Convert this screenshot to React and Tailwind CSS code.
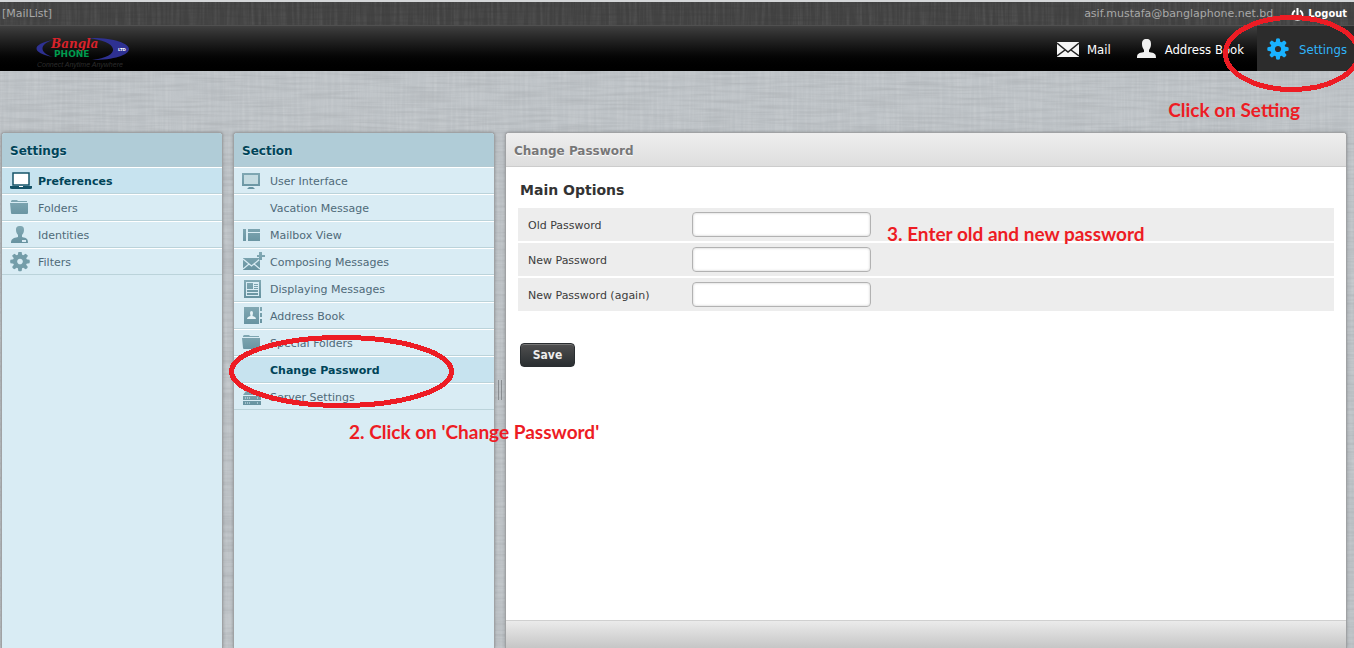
import React from "react";

const VERDANA = "font-['Verdana','DejaVu_Sans',sans-serif]";
const TAHOMA = "font-['Tahoma','DejaVu_Sans_Condensed','DejaVu_Sans',sans-serif]";
const NOTE = "font-['Lato',sans-serif] text-[19px] leading-6 font-bold text-[#ed1c24] whitespace-nowrap";

const C = "url(#teal)";

function LinenDefs() {
  return (
    <svg className="absolute h-0 w-0" aria-hidden="true">
      <defs>
        <linearGradient id="teal" gradientUnits="userSpaceOnUse" x1="0" y1="0" x2="0" y2="20">
          <stop offset="0" stopColor="#83aab5" />
          <stop offset="1" stopColor="#64909e" />
        </linearGradient>
        <filter id="warp" x="0" y="0" width="100%" height="100%">
          <feTurbulence type="fractalNoise" baseFrequency="0.35 0.02" numOctaves="2" seed="3" />
          <feColorMatrix type="matrix" values="0 0 0 0 1  0 0 0 0 1  0 0 0 0 1  1.6 0 0 0 -0.6" />
        </filter>
        <filter id="weft" x="0" y="0" width="100%" height="100%">
          <feTurbulence type="fractalNoise" baseFrequency="0.02 0.35" numOctaves="2" seed="8" />
          <feColorMatrix type="matrix" values="0 0 0 0 0  0 0 0 0 0  0 0 0 0 0  1.6 0 0 0 -0.6" />
        </filter>
      </defs>
    </svg>
  );
}

function Linen({ className }) {
  return (
    <svg className={`pointer-events-none absolute inset-0 -z-10 h-full w-full ${className}`} aria-hidden="true">
      <rect width="100%" height="100%" filter="url(#warp)" />
      <rect width="100%" height="100%" filter="url(#weft)" opacity="0.5" />
    </svg>
  );
}

function GearShape({ fill, hole = 3.1 }) {
  const teeth = [0, 45, 90, 135, 180, 225, 270, 315];
  return (
    <g>
      {teeth.map((a) => (
        <path key={a} d="M-2.4 -6.500 L-1.8 -10.3 Q0 -11.1 1.8 -10.3 L2.4 -6.500 Z" fill={fill} transform={`rotate(${a})`} />
      ))}
      <circle r={(7.6 + hole) / 2} fill="none" stroke={fill} strokeWidth={7.6 - hole} />
    </g>
  );
}

function Logo() {
  return (
    <svg width="94" height="36" viewBox="0 0 94 36" role="img" aria-label="Bangla Phone Ltd">
      <path d="M17 5 C-5 9 -5 18 17 22 C3 18 3 9 17 5 Z" fill="#2e3192" />
      <path d="M52 3 C76 2 93 8 93 14 C93 20 78 25 56 25 C70 23 78 19 77 14 C76 8 66 5 52 3 Z" fill="#2e3192" />
      <text x="15" y="13" fontFamily="DejaVu Serif, serif" fontStyle="italic" fontWeight="bold" fontSize="12" fill="#d8222a">
        Bangla
      </text>
      <text x="18" y="22" fontFamily="DejaVu Sans, sans-serif" fontWeight="bold" fontSize="9" fill="#009a4e">
        PHONE
      </text>
      <text x="82" y="16" fontFamily="DejaVu Sans, sans-serif" fontWeight="bold" fontSize="4" fill="#ffffff">
        LTD
      </text>
      <text x="1" y="32" fontFamily="Liberation Sans, sans-serif" fontStyle="italic" fontSize="7" fill="#2d2d2d">
        Connect Anytime Anywhere
      </text>
    </svg>
  );
}

function Icon({ name }) {
  const shapes = {
    laptop: (
      <>
        <rect x="3" y="2" width="16" height="12" fill="#fff" stroke="#165468" strokeWidth="1.5" />
        <path d="M0 15 H22 V17 Q22 18 20 18 H2 Q0 18 0 17 Z" fill="#165468" />
        <rect x="9" y="15" width="4" height="1" fill="#fff" />
      </>
    ),
    folder: (
      <>
        <path d="M1 4 V3 L2 2 H7 L8 3 H17 V4 Z" fill={C} />
        <path d="M0 5 H18 V15 Q18 16 17 16 H2 Q1 16 1 15 Z" fill={C} />
      </>
    ),
    person: (
      <>
        <path d="M6 5 C6 2 7 1 10 1 C13 1 14 2 14 5 C14 7 13 9 12 10 V12 C17 13 18 14 18 18 H1 C1 14 3 13 8 12 V10 C7 9 6 7 6 5 Z" fill={C} />
        <rect x="12" y="15" width="4" height="2" fill="#d9ecf4" />
      </>
    ),
    gear: (
      <g transform="translate(10 9.5) scale(0.92)">
        <GearShape fill="#749da9" />
      </g>
    ),
    monitor: (
      <>
        <rect x="1" y="3" width="16" height="11" fill="#c4dbe1" stroke={C} strokeWidth="2" />
        <path d="M7 16 H11 L13 18 H5 Z" fill={C} />
      </>
    ),
    list: (
      <g fill={C}>
        <rect x="1" y="4" width="3" height="12" />
        <rect x="6" y="4" width="12" height="3" />
        <rect x="6" y="8" width="12" height="8" />
      </g>
    ),
    compose: (
      <>
        <rect x="1" y="6" width="17" height="12" fill={C} />
        <path d="M1 7 L9.500 14 L18 7 M1 17 L7 12 M18 17 L12 12" fill="none" stroke="#d9ecf4" strokeWidth="1.200" />
        <path d="M17 0 H20 V3 H23 V5 H20 V8 H17 V5 H15 V3 H17 Z" fill={C} />
      </>
    ),
    news: (
      <>
        <path d="M3 2 H18 V18 H3 Z" fill="#d9ecf4" stroke={C} strokeWidth="2" />
        <g fill={C}>
          <rect x="5" y="4" width="6" height="6" />
          <rect x="12" y="5" width="4" height="1" />
          <rect x="12" y="7" width="4" height="1" />
          <rect x="12" y="9" width="4" height="1" />
          <rect x="5" y="11" width="11" height="2" />
          <rect x="5" y="14" width="11" height="2" />
        </g>
      </>
    ),
    book: (
      <>
        <rect x="2" y="1" width="15" height="17" fill={C} />
        <path d="M8 7 Q8 5 9.500 5 Q11 5 11 7 L10.500 10 Q14 11 14 13 H5 Q5 11 8.500 10 Z" fill="#e6f2f6" />
        <g fill={C}>
          <rect x="18" y="1" width="2" height="4" />
          <rect x="18" y="7" width="2" height="4" />
          <rect x="18" y="13" width="2" height="4" />
        </g>
      </>
    ),
    server: (
      <>
        <path d="M4 4 H15 L18 8 H1 Z" fill={C} />
        <rect x="1" y="9" width="18" height="4" fill={C} />
        <rect x="1" y="14" width="18" height="4" fill={C} />
        <path d="M3 11 H9 M15 11 H17 M3 16 H9 M15 16 H17" stroke="#d9ecf4" strokeWidth="1" strokeDasharray="1 1" />
      </>
    ),
  };
  return (
    <svg className="h-5 w-6 shrink-0" viewBox="0 0 24 20" aria-hidden="true">
      {shapes[name]}
    </svg>
  );
}

function NavPanel({ title, items, active, className }) {
  return (
    <nav className={`flex flex-col overflow-hidden rounded-t border border-b-0 border-[#a0a2a4] bg-[#d9ecf4] shadow-[0_0_3px_rgba(0,0,0,0.25)] ${className}`}>
      <h2 className="h-[34px] shrink-0 border-b border-[#b3cad2] bg-[#b0ccd7] px-2 text-xs leading-[36px] font-bold text-[#004458] [text-shadow:0_1px_1px_#d4e6ed]">
        {title}
      </h2>
      <ul>
        {items.map(([label, icon]) => (
          <li key={label}>
            <a
              href="#"
              className={
                label === active
                  ? "flex h-[27px] items-center gap-1 border-t border-b border-t-white border-b-[#bbd3da] bg-[#c7e3ef] px-2 text-[11px] font-bold text-[#004458]"
                  : "flex h-[27px] items-center gap-1 border-t border-b border-t-white border-b-[#bbd3da] px-2 text-[11px] text-[#4f6a79]"
              }
            >
              {icon ? <Icon name={icon} /> : <span className="w-6" />}
              <span className="pt-[3px] leading-4 whitespace-nowrap">{label}</span>
            </a>
          </li>
        ))}
      </ul>
    </nav>
  );
}

const SETTINGS = [
  ["Preferences", "laptop"],
  ["Folders", "folder"],
  ["Identities", "person"],
  ["Filters", "gear"],
];

const SECTIONS = [
  ["User Interface", "monitor"],
  ["Vacation Message", null],
  ["Mailbox View", "list"],
  ["Composing Messages", "compose"],
  ["Displaying Messages", "news"],
  ["Address Book", "book"],
  ["Special Folders", "folder"],
  ["Change Password", null],
  ["Server Settings", "server"],
];

const FIELDS = [
  ["old", "Old Password"],
  ["new", "New Password"],
  ["again", "New Password (again)"],
];

function TopBar() {
  return (
    <div className="relative isolate flex h-[25px] items-center justify-between border-t-2 border-[#d4d6d8] bg-[#434343] pt-0.5 pr-[7px] pl-0.5 text-[11px] text-[#a8a8a8]">
      <Linen className="opacity-10" />
      <span>[MailList]</span>
      <div className="flex items-center gap-[18px]">
        <span>asif.mustafa@banglaphone.net.bd</span>
        <a href="#" className={`flex items-center gap-1 font-bold text-white ${TAHOMA}`}>
          <svg width="13" height="13" viewBox="0 0 13 13" fill="none" stroke="#fff" strokeWidth="2" aria-hidden="true">
            <path d="M4 2.500 A5 5 0 1 0 9 2.500 M6.500 0 V7" />
          </svg>
          Logout
        </a>
      </div>
    </div>
  );
}

function TaskBar() {
  return (
    <header className="flex h-[46px] items-stretch justify-between border-t border-[#505050] bg-linear-to-b from-[#404040] to-black pl-9">
      <a href="#" className="flex items-end">
        <Logo />
      </a>
      <nav className={`flex items-stretch text-[13px] text-white ${TAHOMA}`}>
        <a href="#" className="flex items-center gap-2 pr-[13px] pl-3">
          <svg width="22" height="16" viewBox="0 0 22 16" aria-hidden="true">
            <rect y="1" width="22" height="15" fill="#f4f4f4" />
            <path d="M0 2 L11 11 L22 2 M0 15 L8 9 M22 15 L14 9" fill="none" stroke="#222" strokeWidth="1.500" />
          </svg>
          <span className="pt-0.5">Mail</span>
        </a>
        <a href="#" className="flex items-center gap-2 pr-[13px] pl-3">
          <svg width="21" height="20" viewBox="0 0 21 20" aria-hidden="true">
            <path d="M6 5 C6 2 7 0 10.500 0 C14 0 15 2 15 5 C15 8 14 9 13 11 V13 C19 14 20 15 20 19 H1 C1 15 2 14 8 13 V11 C7 9 6 8 6 5 Z" fill="#f0f0f0" />
          </svg>
          <span className="pt-0.5">Address Book</span>
        </a>
        <a href="#" className="flex items-center gap-[10px] bg-[#2c2c2c] pr-[7px] pl-[10px] text-[#2fb5fa]">
          <svg width="22" height="22" viewBox="-11 -11 22 22" aria-hidden="true">
            <GearShape fill="#19b2ff" />
          </svg>
          <span className="pt-0.5">Settings</span>
        </a>
      </nav>
    </header>
  );
}

function PasswordPanel() {
  return (
    <main className="flex min-w-0 flex-1 flex-col overflow-hidden rounded-t border border-b-0 border-[#a0a2a4] bg-white shadow-[0_0_3px_rgba(0,0,0,0.25)]">
      <h1 className="h-[34px] shrink-0 border-b border-[#cccccc] bg-linear-to-b from-[#eeeeee] to-[#dedede] px-2 text-xs leading-[36px] font-bold text-[#777777] [text-shadow:0_1px_1px_#fff]">
        Change Password
      </h1>
      <form className="flex-1 px-3 pt-3">
        <fieldset>
          <legend className="px-0.5 text-sm leading-[22px] font-bold text-[#333333]">Main Options</legend>
          <div className="mt-[7px] flex flex-col gap-0.5">
            {FIELDS.map(([id, label]) => (
              <div key={id} className="flex h-[33px] items-center bg-[#ededed] pl-[10px] text-[11px] text-[#3c3c3c]">
                <label htmlFor={id} className="w-[164px] pt-[3px] leading-4">
                  {label}
                </label>
                <input
                  id={id}
                  type="password"
                  className="h-[25px] w-[179px] rounded border border-[#b2b2b2] bg-white px-1 shadow-[inset_0_0_2px_1px_rgba(0,0,0,0.1)]"
                />
              </div>
            ))}
          </div>
        </fieldset>
        <button
          type="button"
          className={`mt-8 ml-0.5 h-6 w-[55px] rounded border border-[#2a2e31] bg-linear-to-b from-[#505050] to-[#2a2e31] text-xs font-bold text-[#ededed] shadow-[inset_0_1px_0_#777] ${TAHOMA}`}
        >
          Save
        </button>
      </form>
      <footer className="h-7 shrink-0 border-t border-[#d0d0d0] bg-linear-to-b from-[#ebebeb] to-[#c6c6c6]" />
    </main>
  );
}

export default function App() {
  return (
    <div className={`relative isolate flex min-h-screen flex-col overflow-hidden bg-[#bec3c7] ${VERDANA}`}>
      <LinenDefs />
      <Linen className="opacity-15" />
      <TopBar />
      <TaskBar />
      <div className="flex flex-1 pt-[61px] pr-[7px] pl-px">
        <NavPanel title="Settings" items={SETTINGS} active="Preferences" className="w-[222px]" />
        <NavPanel title="Section" items={SECTIONS} active="Change Password" className="ml-[10px] w-[262px]" />
        <div className="flex w-[10px] items-center justify-center gap-0.5">
          <span className="h-5 w-px bg-[#888c90]" />
          <span className="h-5 w-px bg-[#888c90]" />
        </div>
        <PasswordPanel />
      </div>

      <svg className="pointer-events-none absolute top-[15px] right-[-7px]" width="138" height="77" viewBox="0 0 138 77" fill="none" stroke="#ed1c24" strokeWidth="5" shapeRendering="crispEdges" aria-hidden="true">
        <ellipse cx="69" cy="38.500" rx="66.500" ry="36" />
      </svg>
      <p className={`absolute top-[98px] right-[54px] ${NOTE}`}>Click on Setting</p>
      <svg className="pointer-events-none absolute top-[335px] left-[229px]" width="225" height="73" viewBox="0 0 225 73" fill="none" stroke="#ed1c24" strokeWidth="5" shapeRendering="crispEdges" aria-hidden="true">
        <ellipse cx="112.500" cy="36.500" rx="110" ry="34" />
      </svg>
      <p className={`absolute top-[420px] left-[349px] ${NOTE}`}>2. Click on 'Change Password'</p>
      <p className={`absolute top-[222px] left-[887px] ${NOTE}`}>3. Enter old and new password</p>
    </div>
  );
}
